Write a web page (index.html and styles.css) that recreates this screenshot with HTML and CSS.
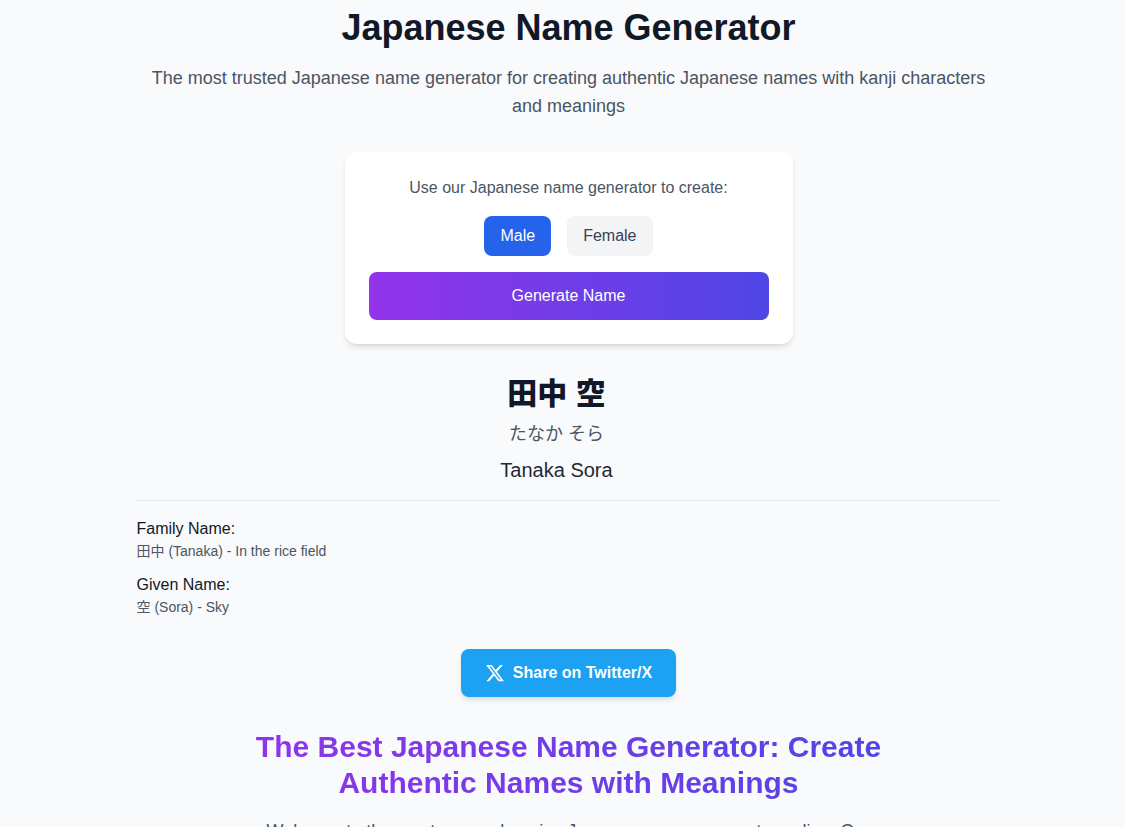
FILE: index.html
```html
<!DOCTYPE html>
<html lang="en">
<head>
<meta charset="utf-8">
<title>Japanese Name Generator</title>
<link rel="stylesheet" href="styles.css">
</head>
<body>
<main class="page">
  <header class="hero">
    <h1 class="title">Japanese Name Generator</h1>
    <p class="lead">The most trusted Japanese name generator for creating authentic Japanese names with kanji characters and meanings</p>
  </header>

  <section class="card">
    <p class="prompt">Use our Japanese name generator to create:</p>
    <div class="choices">
      <button type="button" class="choice choice-active">Male</button>
      <button type="button" class="choice">Female</button>
    </div>
    <button type="button" class="generate">Generate Name</button>
  </section>

  <section class="result">
    <div class="name">
      <h2 class="kanji" lang="ja">田中 空</h2>
      <p class="kana" lang="ja">たなか そら</p>
      <p class="romaji">Tanaka Sora</p>
    </div>
    <dl class="details">
      <div>
        <dt>Family Name:</dt>
        <dd><span lang="ja">田中</span> (Tanaka) - In the rice field</dd>
      </div>
      <div>
        <dt>Given Name:</dt>
        <dd><span lang="ja">空</span> (Sora) - Sky</dd>
      </div>
    </dl>
  </section>

  <button type="button" class="share">
    <svg class="share-icon" viewBox="0 0 24 24" fill="currentColor" aria-hidden="true"><path d="M18.244 2.25h3.308l-7.227 8.26 8.502 11.24H16.17l-5.214-6.817L4.99 21.75H1.68l7.73-8.835L1.254 2.25H8.08l4.713 6.231zm-1.161 17.52h1.833L7.084 4.126H5.117z"/></svg>
    Share on Twitter/X
  </button>

  <section class="about">
    <h2 class="about-title">The Best Japanese Name Generator: Create Authentic Names with Meanings</h2>
    <p class="about-text">Welcome to the most comprehensive Japanese name generator online. Our</p>
  </section>
</main>
</body>
</html>
```
FILE: styles.css
```css
* {
  box-sizing: border-box;
  margin: 0;
  padding: 0;
}

html {
  scrollbar-width: none;
}

body {
  padding-left: 12px;
  background: #f9fafb;
  color: #111827;
  font-family: "Liberation Sans", "Noto Sans CJK JP", sans-serif;
  font-size: 16px;
  line-height: 24px;
}

button {
  border: 0;
  font: inherit;
  cursor: pointer;
}

.page {
  display: flex;
  flex-direction: column;
  align-items: center;
  max-width: 896px;
  margin: 0 auto;
  padding: 8px 16px 0;
}

.hero {
  text-align: center;
}

.title {
  font-size: 36px;
  line-height: 40px;
}

.lead {
  margin-top: 16px;
  color: #4b5563;
  font-size: 18px;
  line-height: 28px;
}

.card {
  display: flex;
  flex-direction: column;
  gap: 16px;
  width: 100%;
  max-width: 448px;
  margin-top: 32px;
  padding: 24px;
  border-radius: 12px;
  background: #fff;
  box-shadow: 0 4px 6px -1px rgba(0, 0, 0, .1), 0 2px 4px -2px rgba(0, 0, 0, .1);
}

.prompt {
  color: #4b5563;
  text-align: center;
}

.choices {
  display: flex;
  justify-content: center;
  gap: 16px;
}

.choice {
  padding: 8px 16px;
  border-radius: 8px;
  background: #f3f4f6;
  color: #374151;
}

.choice-active {
  background: #2563eb;
  color: #fff;
}

.generate {
  padding: 12px 24px;
  border-radius: 8px;
  background: linear-gradient(to right, #9333ea, #4f46e5);
  color: #fff;
}

.result {
  width: 100%;
  margin-top: 32px;
}

.name {
  padding: 0 24px 16px 0;
  border-bottom: 1px solid #e5e7eb;
  text-align: center;
}

.kanji {
  font-size: 30px;
  font-weight: 900;
  line-height: 36px;
}

.kana {
  margin-top: 8px;
  color: #4b5563;
  font-size: 18px;
  line-height: 28px;
}

.romaji {
  margin-top: 8px;
  color: #1f2937;
  font-size: 20px;
  line-height: 28px;
}

.details {
  display: grid;
  gap: 12px;
  padding-top: 16px;
}

.details dd {
  color: #4b5563;
  font-size: 14px;
  line-height: 20px;
}

.share {
  display: flex;
  align-items: center;
  gap: 8px;
  margin-top: 32px;
  padding: 12px 24px;
  border-radius: 8px;
  background: #1da1f2;
  color: #fff;
  font-weight: 700;
  box-shadow: 0 4px 6px -1px rgba(0, 0, 0, .1), 0 2px 4px -2px rgba(0, 0, 0, .1);
}

.share-icon {
  width: 20px;
  height: 20px;
}

.about {
  width: 100%;
  max-width: 672px;
  margin-top: 32px;
  text-align: center;
}

.about-title {
  background: linear-gradient(to right, #9333ea, #4f46e5);
  -webkit-background-clip: text;
  background-clip: text;
  color: transparent;
  font-size: 30px;
  line-height: 36px;
}

.about-text {
  margin-top: 16px;
  color: #4b5563;
  font-size: 18px;
  line-height: 28px;
}
```
